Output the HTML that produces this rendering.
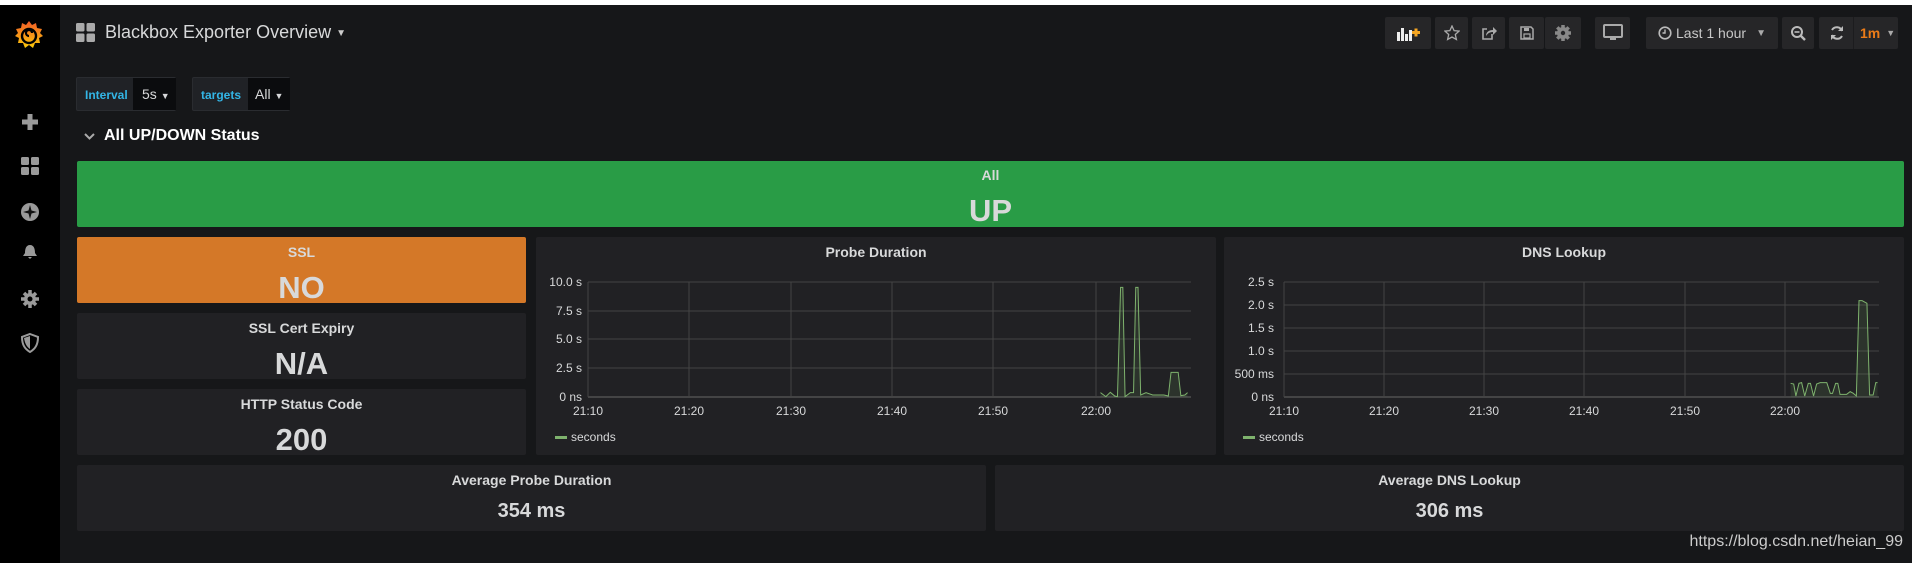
<!DOCTYPE html>
<html><head><meta charset="utf-8"><style>
*{margin:0;padding:0;box-sizing:border-box}
body{width:1912px;height:563px;background:#161719;position:relative;overflow:hidden;font-family:"Liberation Sans",sans-serif;color:#d8d9da}
.a{position:absolute}
.side{left:0;top:5px;width:60px;height:558px;background:#000}
.btn{position:absolute;top:17px;height:32px;background:#262628;border-radius:2px;display:flex;align-items:center;justify-content:center}
.panel{position:absolute;background:#212124;border-radius:2px}
.pt{position:absolute;left:0;right:0;text-align:center;font-weight:bold;font-size:14px;color:#d8d9da}
.big{position:absolute;left:0;right:0;text-align:center;font-weight:bold;font-size:31px;color:#d8d9da}
.ax{font-family:"Liberation Sans",sans-serif;font-size:12px;fill:#d8d9da}
</style></head><body>
<div class="a" style="left:0;top:0;width:1912px;height:5px;background:#fff"></div>
<div class="a side"></div>
<!-- logo -->
<svg class="a" style="left:13px;top:19px" width="32" height="32" viewBox="0 0 32 32">
<defs><linearGradient id="g" x1="0" y1="1" x2="0" y2="0"><stop offset="0" stop-color="#fbca0a"/><stop offset="1" stop-color="#f05a28"/></linearGradient></defs>
<path d="M16 2l3 4 4-2 1 5 5 1-2 4 3 3-4 2 1 5-5 0-2 5-4-3-4 3-2-5-5 0 1-5-4-2 3-3-2-4 5-1 1-5 4 2z" fill="url(#g)"/>
<circle cx="16" cy="17" r="7" fill="none" stroke="#000" stroke-width="2.4"/>
<path d="M16 17 a3 3 0 1 1 3 -3" fill="none" stroke="#000" stroke-width="2.2"/>
</svg>
<!-- sidebar icons -->
<svg class="a" style="left:20px;top:112px" width="20" height="250" viewBox="0 0 20 250" fill="#9a9a9a">
<rect x="7.5" y="2" width="5" height="16"/><rect x="2" y="7.5" width="16" height="5"/>
<rect x="1" y="45" width="8" height="8" rx="1.5"/><rect x="11" y="45" width="8" height="8" rx="1.5"/><rect x="1" y="55" width="8" height="8" rx="1.5"/><rect x="11" y="55" width="8" height="8" rx="1.5"/>
<circle cx="10" cy="100" r="9"/><path d="M10 93l1.5 5.5 5.5 1.5-5.5 1.5-1.5 5.5-1.5-5.5-5.5-1.5 5.5-1.5z" fill="#111"/>
<path d="M10 133c-4 0-5 4-5 8l-2 3h14l-2-3c0-4-1-8-5-8zM8 145h4l-2 2z"/>
<circle cx="10" cy="187" r="6"/><g stroke="#9a9a9a" stroke-width="3.5"><line x1="10" y1="178" x2="10" y2="196"/><line x1="1" y1="187" x2="19" y2="187"/><line x1="4" y1="181" x2="16" y2="193"/><line x1="16" y1="181" x2="4" y2="193"/></g><circle cx="10" cy="187" r="2.5" fill="#000"/>
<path d="M10 222l8 3c0 8-3 12-8 15-5-3-8-7-8-15z" fill="none" stroke="#9a9a9a" stroke-width="2"/><path d="M10 224v13c-3-2-5-5-6-11z"/>
</svg>
<!-- title -->
<svg class="a" style="left:76px;top:23px" width="19" height="19"><rect x="0" y="0" width="8.5" height="8.5" rx="1.5" fill="#aaa"/><rect x="10.5" y="0" width="8.5" height="8.5" rx="1.5" fill="#aaa"/><rect x="0" y="10.5" width="8.5" height="8.5" rx="1.5" fill="#aaa"/><rect x="10.5" y="10.5" width="8.5" height="8.5" rx="1.5" fill="#aaa"/></svg>
<div class="a" style="left:105px;top:22px;font-size:18px;color:#d8d9da">Blackbox Exporter Overview <span style="font-size:10px;color:#ccc;vertical-align:2px">▼</span></div>
<!-- top buttons -->
<div class="btn" style="left:1385px;width:46px"><svg width="24" height="16"><rect x="1" y="7" width="3" height="9" fill="#eee"/><rect x="5" y="3" width="3" height="13" fill="#eee"/><rect x="9" y="9" width="3" height="7" fill="#eee"/><rect x="13" y="5" width="3" height="11" fill="#eee"/><rect x="16" y="6" width="8" height="3" fill="#f5a623"/><rect x="18.5" y="3.5" width="3" height="8" fill="#f5a623"/></svg></div>
<div class="btn" style="left:1435px;width:33px"><svg width="16" height="16"><path d="M8 1l2.1 4.6 5 .5-3.8 3.4 1.1 5L8 12l-4.4 2.5 1.1-5L.9 6.1l5-.5z" fill="none" stroke="#aaa" stroke-width="1.3"/></svg></div>
<div class="btn" style="left:1472px;width:33px"><svg width="16" height="16"><path d="M11 9v5H2V4h4" fill="none" stroke="#aaa" stroke-width="1.6"/><path d="M5 11c0-4 3-6 7-6V2l4 4-4 4V7c-3 0-5 1-7 4z" fill="#aaa"/></svg></div>
<div class="btn" style="left:1509px;width:35px"><svg width="16" height="16"><path d="M2 2h10l2 2v10H2z" fill="none" stroke="#aaa" stroke-width="1.5"/><rect x="5" y="3" width="5" height="3" fill="#aaa"/><rect x="5" y="9" width="6" height="4" fill="none" stroke="#aaa" stroke-width="1.2"/></svg></div>
<div class="btn" style="left:1545px;width:36px"><svg width="18" height="18"><g stroke="#888" stroke-width="3.5"><line x1="9" y1="1" x2="9" y2="17"/><line x1="1" y1="9" x2="17" y2="9"/><line x1="3.3" y1="3.3" x2="14.7" y2="14.7"/><line x1="14.7" y1="3.3" x2="3.3" y2="14.7"/></g><circle cx="9" cy="9" r="6" fill="#888"/><circle cx="9" cy="9" r="2.2" fill="#262628"/></svg></div>
<div class="btn" style="left:1595px;width:35px"><svg width="20" height="18"><rect x="1" y="1" width="18" height="12" rx="1" fill="none" stroke="#aaa" stroke-width="2"/><rect x="7" y="14" width="6" height="2" fill="#aaa"/></svg></div>
<div class="btn" style="left:1646px;width:132px;justify-content:flex-start;padding-left:12px;font-size:14px;color:#c8c8c8"><svg width="14" height="14" style="margin-right:4px"><circle cx="7" cy="7" r="5.8" fill="none" stroke="#bbb" stroke-width="1.6"/><path d="M7 3.5V7H4.5" fill="none" stroke="#bbb" stroke-width="1.4"/></svg>Last 1 hour <span style="font-size:10px;margin-left:10px;color:#aaa">▼</span></div>
<div class="btn" style="left:1782px;width:32px"><svg width="16" height="16"><circle cx="7" cy="7" r="5" fill="none" stroke="#bbb" stroke-width="2"/><line x1="10.5" y1="10.5" x2="15" y2="15" stroke="#bbb" stroke-width="2.4"/><line x1="4.5" y1="7" x2="9.5" y2="7" stroke="#bbb" stroke-width="1.6"/></svg></div>
<div class="btn" style="left:1819px;width:79px;justify-content:flex-start"><svg width="16" height="16" style="margin:0 8px 0 10px"><path d="M13 6A5.5 5.5 0 0 0 3 5M3 10a5.5 5.5 0 0 0 10 1" fill="none" stroke="#bbb" stroke-width="2"/><path d="M14 1v5H9zM2 15v-5h5z" fill="#bbb"/></svg><span style="border-left:1px solid #1c1c1e;height:32px;width:1px;margin-right:6px"></span><span style="color:#eb7b18;font-size:14px;font-weight:bold">1m</span><span style="font-size:9px;color:#aaa;margin-left:6px">▼</span></div>
<!-- variables -->
<div class="a" style="left:76px;top:77px;width:100px;height:34px;background:#202226;border:1px solid #2a2c30;border-radius:2px"></div>
<div class="a" style="left:85px;top:88px;font-size:12px;font-weight:bold;color:#33b5e5">Interval</div>
<div class="a" style="left:133px;top:78px;width:43px;height:32px;background:#0b0c0e"></div>
<div class="a" style="left:142px;top:86px;font-size:14px;color:#d8d9da">5s <span style="font-size:9px">▼</span></div>
<div class="a" style="left:192px;top:77px;width:98px;height:34px;background:#202226;border:1px solid #2a2c30;border-radius:2px"></div>
<div class="a" style="left:201px;top:88px;font-size:12px;font-weight:bold;color:#33b5e5">targets</div>
<div class="a" style="left:248px;top:78px;width:42px;height:32px;background:#0b0c0e"></div>
<div class="a" style="left:255px;top:86px;font-size:14px;color:#d8d9da">All <span style="font-size:9px">▼</span></div>
<!-- row -->
<svg class="a" style="left:84px;top:133px" width="11" height="8"><path d="M1 1l4.5 4.5L10 1" fill="none" stroke="#aaa" stroke-width="2"/></svg>
<div class="a" style="left:104px;top:127px;font-size:16px;font-weight:bold;color:#fff">All UP/DOWN Status</div>
<!-- green -->
<div class="panel" style="left:77px;top:161px;width:1827px;height:66px;background:#299c46">
<div class="pt" style="top:6px">All</div><div class="big" style="top:32px">UP</div></div>
<div class="panel" style="left:77px;top:237px;width:449px;height:66px;background:#d47828">
<div class="pt" style="top:7px">SSL</div><div class="big" style="top:33px">NO</div></div>
<div class="panel" style="left:77px;top:313px;width:449px;height:66px">
<div class="pt" style="top:7px">SSL Cert Expiry</div><div class="big" style="top:33px">N/A</div></div>
<div class="panel" style="left:77px;top:389px;width:449px;height:66px">
<div class="pt" style="top:7px">HTTP Status Code</div><div class="big" style="top:33px">200</div></div>
<div class="panel" style="left:536px;top:237px;width:680px;height:218px"><div class="pt" style="top:7px">Probe Duration</div></div>
<div class="panel" style="left:1224px;top:237px;width:680px;height:218px"><div class="pt" style="top:7px">DNS Lookup</div></div>
<div class="panel" style="left:77px;top:465px;width:909px;height:66px">
<div class="pt" style="top:7px">Average Probe Duration</div><div class="big" style="top:35px;font-size:20px">354 ms</div></div>
<div class="panel" style="left:995px;top:465px;width:909px;height:66px">
<div class="pt" style="top:7px">Average DNS Lookup</div><div class="big" style="top:35px;font-size:20px">306 ms</div></div>
<div class="a" style="right:9px;top:533px;font-size:16px;color:#ccc">https://blog.csdn.net/heian_99</div>
<!-- graphs -->
<svg class="a" style="left:0;top:0" width="1912" height="563">
<g stroke="#444" stroke-width="1">
<line x1="588" y1="282" x2="1191" y2="282"/><line x1="588" y1="311" x2="1191" y2="311"/><line x1="588" y1="339" x2="1191" y2="339"/><line x1="588" y1="368" x2="1191" y2="368"/><line x1="588" y1="397" x2="1191" y2="397" stroke="#666"/>
<line x1="588" y1="282" x2="588" y2="397"/><line x1="689" y1="282" x2="689" y2="397"/><line x1="791" y1="282" x2="791" y2="397"/><line x1="892" y1="282" x2="892" y2="397"/><line x1="993" y1="282" x2="993" y2="397"/><line x1="1096" y1="282" x2="1096" y2="397"/>
<line x1="1284" y1="282" x2="1879" y2="282"/><line x1="1284" y1="305" x2="1879" y2="305"/><line x1="1284" y1="328" x2="1879" y2="328"/><line x1="1284" y1="351" x2="1879" y2="351"/><line x1="1284" y1="374" x2="1879" y2="374"/><line x1="1284" y1="397" x2="1879" y2="397" stroke="#666"/>
<line x1="1284" y1="282" x2="1284" y2="397"/><line x1="1384" y1="282" x2="1384" y2="397"/><line x1="1484" y1="282" x2="1484" y2="397"/><line x1="1584" y1="282" x2="1584" y2="397"/><line x1="1685" y1="282" x2="1685" y2="397"/><line x1="1785" y1="282" x2="1785" y2="397"/>
</g>
<g class="ax" text-anchor="end">
<text x="582" y="286">10.0 s</text><text x="582" y="315">7.5 s</text><text x="582" y="343">5.0 s</text><text x="582" y="372">2.5 s</text><text x="582" y="401">0 ns</text>
<text x="1274" y="286">2.5 s</text><text x="1274" y="309">2.0 s</text><text x="1274" y="332">1.5 s</text><text x="1274" y="355">1.0 s</text><text x="1274" y="378">500 ms</text><text x="1274" y="401">0 ns</text>
</g>
<g class="ax" text-anchor="middle">
<text x="588" y="415">21:10</text><text x="689" y="415">21:20</text><text x="791" y="415">21:30</text><text x="892" y="415">21:40</text><text x="993" y="415">21:50</text><text x="1096" y="415">22:00</text>
<text x="1284" y="415">21:10</text><text x="1384" y="415">21:20</text><text x="1484" y="415">21:30</text><text x="1584" y="415">21:40</text><text x="1685" y="415">21:50</text><text x="1785" y="415">22:00</text>
</g>
<rect x="555" y="436" width="12" height="3" fill="#7eb26d"/><text class="ax" x="571" y="441" font-size="11">seconds</text>
<rect x="1243" y="436" width="12" height="3" fill="#7eb26d"/><text class="ax" x="1259" y="441" font-size="11">seconds</text>
<g transform="translate(530,230) scale(0.4464,0.3333)">
<path d="M1278 488L1290 500L1300 487L1310 498L1316 500L1323 172L1328 172L1333 500L1345 488L1352 488L1357 172L1362 172L1368 495L1380 488L1395 495L1420 495L1430 498L1436 427L1452 427L1458 497L1467 495L1473 488L1473 502L1278 502Z" fill="rgba(126,178,109,0.12)"/>
<path d="M1278 488L1290 500L1300 487L1310 498L1316 500L1323 172L1328 172L1333 500L1345 488L1352 488L1357 172L1362 172L1368 495L1380 488L1395 495L1420 495L1430 498L1436 427L1452 427L1458 497L1467 495L1473 488" fill="none" stroke="#7eb26d" stroke-width="1" vector-effect="non-scaling-stroke"/>
</g>
<g transform="translate(1220,230) scale(0.4413,0.3333)">
<path d="M1293 460L1300 462L1305 498L1312 460L1318 458L1325 498L1333 460L1338 460L1345 498L1352 462L1360 458L1375 458L1383 490L1388 490L1395 460L1400 460L1405 493L1420 493L1428 485L1435 490L1442 498L1448 212L1455 212L1466 220L1472 495L1480 495L1486 458L1490 458L1490 502L1293 502Z" fill="rgba(126,178,109,0.12)"/>
<path d="M1293 460L1300 462L1305 498L1312 460L1318 458L1325 498L1333 460L1338 460L1345 498L1352 462L1360 458L1375 458L1383 490L1388 490L1395 460L1400 460L1405 493L1420 493L1428 485L1435 490L1442 498L1448 212L1455 212L1466 220L1472 495L1480 495L1486 458L1490 458" fill="none" stroke="#7eb26d" stroke-width="1" vector-effect="non-scaling-stroke"/>
</g>
</svg>
</body></html>
